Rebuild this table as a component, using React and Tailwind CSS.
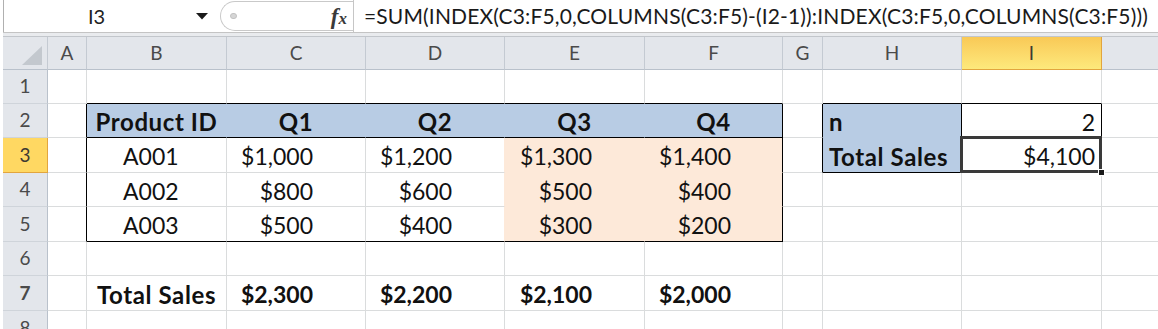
import React from "react";

const FONT = { fontFamily: "Lato, 'Open Sans', sans-serif" };

function C({ w, r = "border-r-[#dadcdd]", b = "border-b-[#dadcdd]", bg = "", className = "", children }) {
  return (
    <div className={`${w} shrink-0 h-full border-r border-b ${r} ${b} ${bg} flex items-center pt-[3px] ${className}`}>
      {children}
    </div>
  );
}

function RH({ n, sel }) {
  return (
    <div
      className={
        sel
          ? "w-[45px] shrink-0 h-full flex items-center justify-center bg-[#ffd862] border-r border-b border-r-[#e2a53e] border-b-[#e2a53e] text-[#3d3a33] text-[19px]"
          : "w-[45px] shrink-0 h-full flex items-center justify-center bg-[#e3e6eb] border-r border-b border-r-[#b9c1cb] border-b-[#cfd4da] text-[#4a4a4a] text-[19px]"
      }
    >
      {n}
    </div>
  );
}

const BLUE = "bg-[#b8cce4]";
const PEACH = "bg-[#fde9d9]";
const BOLD = "font-bold text-[24px] tracking-[0.6px]";

export default function App() {
  return (
    <div className="w-[1158px] h-[329px] overflow-hidden bg-white pl-[3px] text-[#111]" style={FONT}>
      {/* Formula bar */}
      <div className="flex h-[33px] border-b border-[#c4c4c4]">
        <div className="w-[214px] shrink-0 h-full border-l border-[#b0b0b0] flex items-center">
          <span className="ml-[84px] text-[20px] text-[#222]">I3</span>
          <svg className="ml-auto mr-[9px]" width="12" height="7" viewBox="0 0 12 7">
            <path d="M0 0 L12 0 L6 6.5 Z" fill="#1a1a1a" />
          </svg>
        </div>
        <div className="w-[137px] shrink-0 h-full border-r border-[#c6c6c6] flex pl-[3px] py-[1px]">
          <div className="flex-1 flex items-center border-l border-y border-[#c9c9c9] rounded-l-[15px]">
            <div className="ml-[9px] w-[7px] h-[6px] rounded-full bg-[#d6d6d6] border border-[#c2c2c2]" />
            <span className="ml-auto mr-[6px] text-[#3a3a3a] italic font-bold text-[23px] leading-none" style={{ fontFamily: "'Liberation Serif', serif" }}>
              f<span className="text-[17px]">x</span>
            </span>
          </div>
        </div>
        <div className="flex-1 flex items-center pl-[10px] text-[21px] tracking-[0.15px] text-[#1a1a1a] whitespace-nowrap">
          =SUM(INDEX(C3:F5,0,COLUMNS(C3:F5)-(I2-1)):INDEX(C3:F5,0,COLUMNS(C3:F5)))
        </div>
      </div>
      <div className="h-[4px] bg-[#e9ebee] border-b border-[#c2c6cb]" />

      {/* Column headers */}
      <div className="flex h-[33px] text-[19px] text-[#4a4a4a]">
        <div className="w-[45px] shrink-0 h-full bg-[#e3e6eb] border-r border-b border-r-[#c4cad2] border-b-[#b9c1cb] flex items-end justify-end pr-[5px] pb-[4px]">
          <svg width="20" height="19" viewBox="0 0 20 19">
            <path d="M20 0 L20 19 L0 19 Z" fill="#c3c8ce" />
          </svg>
        </div>
        {[
          ["w-[39px]", "A"],
          ["w-[140px]", "B"],
          ["w-[139px]", "C"],
          ["w-[139px]", "D"],
          ["w-[140px]", "E"],
          ["w-[138px]", "F"],
          ["w-[40px]", "G"],
          ["w-[139px]", "H"],
        ].map(([w, l]) => (
          <div key={l} className={`${w} shrink-0 h-full bg-[#e3e6eb] border-r border-b border-r-[#c4cad2] border-b-[#b9c1cb] flex items-center justify-center`}>
            {l}
          </div>
        ))}
        <div className="w-[140px] shrink-0 h-full bg-gradient-to-b from-[#f9c956] to-[#fde97c] border-r border-b border-[#e2a53e] flex items-center justify-center text-[#3d3a33]">
          I
        </div>
        <div className="flex-1 h-full bg-[#e3e6eb] border-b border-b-[#b9c1cb]" />
      </div>

      {/* Row 1 */}
      <div className="flex h-[34px] text-[23px]">
        <RH n="1" />
        <C w="w-[39px]" />
        <C w="w-[140px]" b="border-b-black" />
        <C w="w-[139px]" b="border-b-black" />
        <C w="w-[139px]" b="border-b-black" />
        <C w="w-[140px]" b="border-b-black" />
        <C w="w-[138px]" b="border-b-black" />
        <C w="w-[40px]" />
        <C w="w-[139px]" b="border-b-black" />
        <C w="w-[140px]" b="border-b-black" />
        <div className="flex-1 h-full border-b border-b-[#dadcdd]" />
      </div>

      {/* Row 2 */}
      <div className="flex h-[34px] text-[23px]">
        <RH n="2" />
        <C w="w-[39px]" r="border-r-black" />
        <C w="w-[140px]" bg={BLUE} r="border-r-[#b8cce4]" b="border-b-black" className={`justify-center ${BOLD}`}>Product ID</C>
        <C w="w-[139px]" bg={BLUE} r="border-r-[#b8cce4]" b="border-b-black" className={`justify-center ${BOLD}`}>Q1</C>
        <C w="w-[139px]" bg={BLUE} r="border-r-[#b8cce4]" b="border-b-black" className={`justify-center ${BOLD}`}>Q2</C>
        <C w="w-[140px]" bg={BLUE} r="border-r-[#b8cce4]" b="border-b-black" className={`justify-center ${BOLD}`}>Q3</C>
        <C w="w-[138px]" bg={BLUE} r="border-r-black" b="border-b-black" className={`justify-center ${BOLD}`}>Q4</C>
        <C w="w-[40px]" r="border-r-black" />
        <C w="w-[139px]" bg={BLUE} r="border-r-black" b="border-b-[#b8cce4]" className={`pl-[6px] ${BOLD}`}>n</C>
        <C w="w-[140px]" r="border-r-black" b="border-b-black" className="justify-end pr-[6px]">2</C>
        <div className="flex-1 h-full border-b border-b-[#dadcdd]" />
      </div>

      {/* Rows 3-5 */}
      {[
        ["3", "h-[35px]", "A001", "$1,000", "$1,200", "$1,300", "$1,400"],
        ["4", "h-[34px]", "A002", "$800", "$600", "$500", "$400"],
        ["5", "h-[35px]", "A003", "$500", "$400", "$300", "$200"],
      ].map(([n, h, id, q1, q2, q3, q4]) => {
        const last = n === "5";
        const bb = last ? "border-b-black" : "border-b-[#dadcdd]";
        const pb = last ? "border-b-black" : "border-b-[#fde9d9]";
        return (
          <div key={n} className={`flex ${h} text-[23px]`}>
            <RH n={n} sel={n === "3"} />
            <C w="w-[39px]" r="border-r-black" />
            <C w="w-[140px]" b={bb} className="pl-[36px]">{id}</C>
            <C w="w-[139px]" b={bb} className="justify-end pr-[52px]">{q1}</C>
            <C w="w-[139px]" b={bb} r="border-r-[#fde9d9]" className="justify-end pr-[52px]">{q2}</C>
            <C w="w-[140px]" bg={PEACH} r="border-r-[#fde9d9]" b={pb} className="justify-end pr-[52px]">{q3}</C>
            <C w="w-[138px]" bg={PEACH} r="border-r-black" b={pb} className="justify-end pr-[51px]">{q4}</C>
            {n === "3" ? (
              <>
                <C w="w-[40px]" r="border-r-black" />
                <C w="w-[139px]" bg={BLUE} r="border-r-black" b="border-b-black" className={`pl-[6px] ${BOLD}`}>Total Sales</C>
                <div className="w-[140px] shrink-0 h-full border-r border-b border-r-black border-b-black relative flex items-center justify-end pr-[6px] pt-[3px]">
                  $4,100
                  <div className="absolute -left-[2px] -top-[2px] -right-[1px] -bottom-[1px] border-[3px] border-[#3a3a3a] pointer-events-none" />
                  <div className="absolute -right-[4px] -bottom-[4px] w-[7px] h-[7px] bg-[#1a1a1a] border border-white" />
                </div>
              </>
            ) : (
              <>
                <C w="w-[40px]" />
                <C w="w-[139px]" />
                <C w="w-[140px]" />
              </>
            )}
            <div className="flex-1 h-full border-b border-b-[#dadcdd]" />
          </div>
        );
      })}

      {/* Row 6 */}
      <div className="flex h-[34px] text-[23px]">
        <RH n="6" />
        <C w="w-[39px]" />
        <C w="w-[140px]" />
        <C w="w-[139px]" />
        <C w="w-[139px]" />
        <C w="w-[140px]" />
        <C w="w-[138px]" />
        <C w="w-[40px]" />
        <C w="w-[139px]" />
        <C w="w-[140px]" />
        <div className="flex-1 h-full border-b border-b-[#dadcdd]" />
      </div>

      {/* Row 7 */}
      <div className="flex h-[35px] text-[23px] font-bold">
        <RH n="7" />
        <C w="w-[39px]" />
        <C w="w-[140px]" className={`justify-center ${BOLD}`}>Total Sales</C>
        <C w="w-[139px]" className="justify-end pr-[52px]">$2,300</C>
        <C w="w-[139px]" className="justify-end pr-[52px]">$2,200</C>
        <C w="w-[140px]" className="justify-end pr-[52px]">$2,100</C>
        <C w="w-[138px]" className="justify-end pr-[51px]">$2,000</C>
        <C w="w-[40px]" />
        <C w="w-[139px]" />
        <C w="w-[140px]" />
        <div className="flex-1 h-full border-b border-b-[#dadcdd]" />
      </div>

      {/* Row 8 */}
      <div className="flex h-[34px] text-[23px]">
        <div className="w-[45px] shrink-0 h-full flex items-center justify-center bg-[#e3e6eb] border-r border-r-[#b9c1cb] text-[#4a4a4a] text-[19px]">8</div>
        <div className="w-[39px] shrink-0 h-full border-r border-r-[#dadcdd]" />
        <div className="w-[140px] shrink-0 h-full border-r border-r-[#dadcdd]" />
        <div className="w-[139px] shrink-0 h-full border-r border-r-[#dadcdd]" />
        <div className="w-[139px] shrink-0 h-full border-r border-r-[#dadcdd]" />
        <div className="w-[140px] shrink-0 h-full border-r border-r-[#dadcdd]" />
        <div className="w-[138px] shrink-0 h-full border-r border-r-[#dadcdd]" />
        <div className="w-[40px] shrink-0 h-full border-r border-r-[#dadcdd]" />
        <div className="w-[139px] shrink-0 h-full border-r border-r-[#dadcdd]" />
        <div className="w-[140px] shrink-0 h-full border-r border-r-[#dadcdd]" />
      </div>
    </div>
  );
}
